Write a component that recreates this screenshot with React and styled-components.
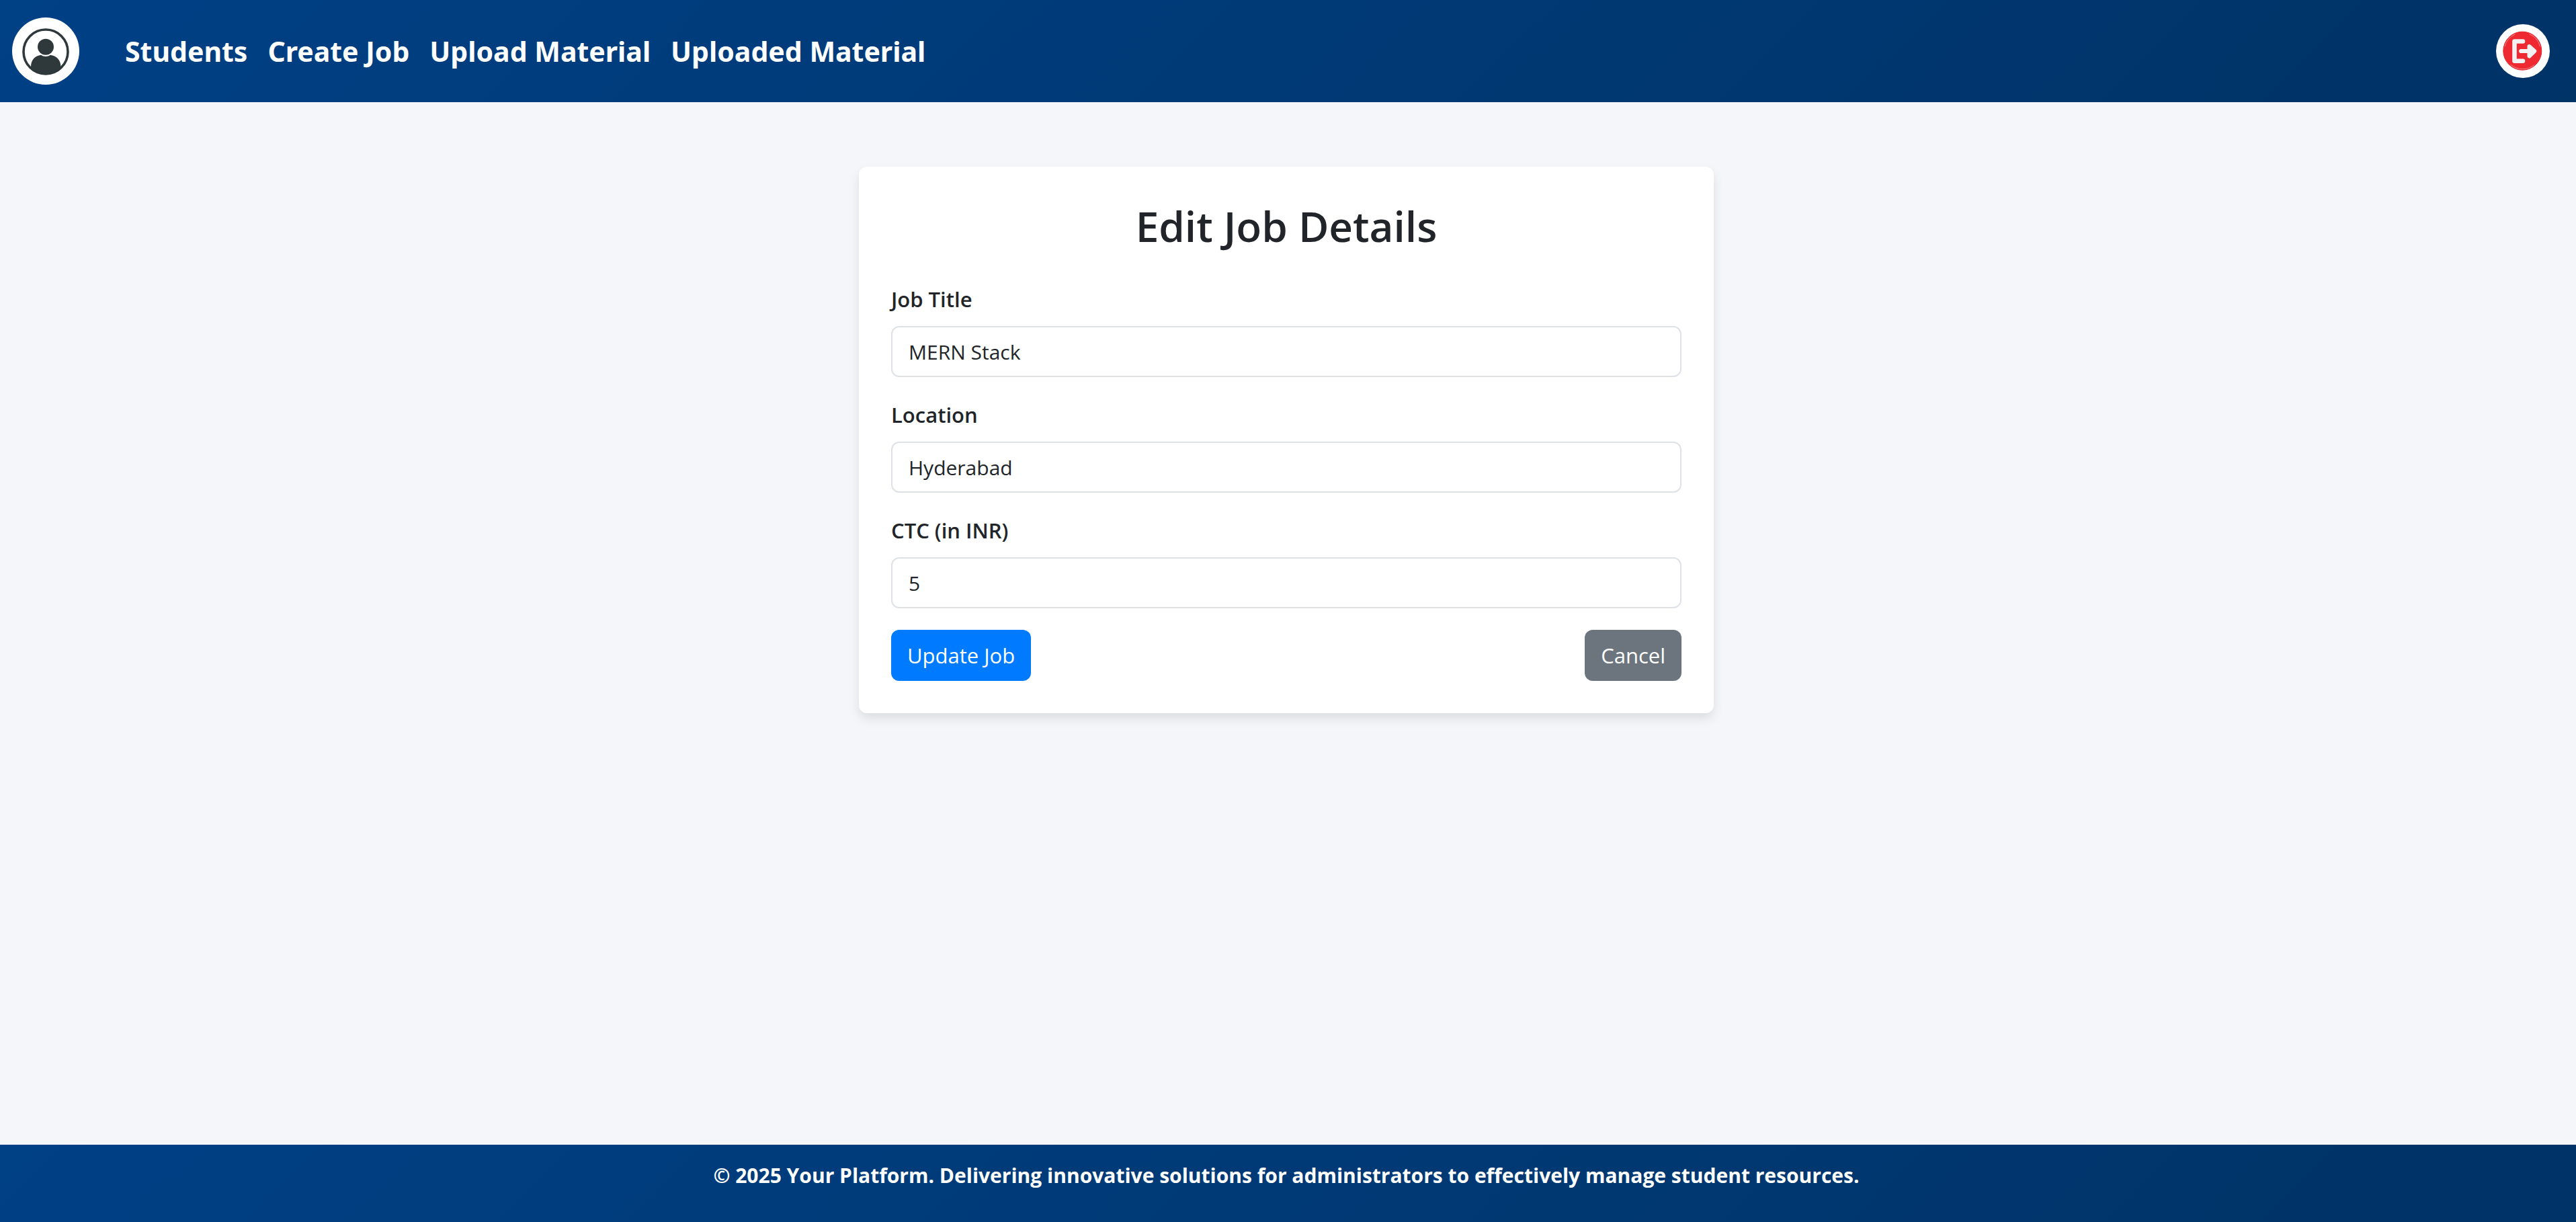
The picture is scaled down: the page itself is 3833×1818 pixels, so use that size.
import React, { useState } from "react";
import styled, { createGlobalStyle } from "styled-components";

const GlobalStyle = createGlobalStyle`
  *, *::before, *::after { box-sizing: border-box; }
  body {
    margin: 0;
    background: #f4f6fa;
    color: #212529;
    font-family: "Open Sans", "Noto Sans", sans-serif;
    font-size: 30px;
    line-height: 48px;
  }
`;

const Page = styled.div`
  display: flex;
  flex-direction: column;
  min-height: 100vh;
`;

const Header = styled.header`
  display: flex;
  align-items: center;
  padding: 26px 39px 26px 18px;
  background: linear-gradient(135deg, #004085, #003366);
`;

const AvatarLink = styled.a`
  display: flex;
  flex: none;
  width: 100px;
  height: 100px;
  border-radius: 50%;
  background: #fff;
`;

const Nav = styled.nav`
  display: flex;
  flex: 1;
  gap: 30px;
  margin-left: 68px;
`;

const NavLink = styled.a`
  color: #fff;
  font-family: "Noto Sans", "Open Sans", sans-serif;
  font-size: 41px;
  font-weight: 700;
  line-height: 46px;
  text-decoration: none;
  white-space: nowrap;
`;

const LogoutButton = styled.button`
  display: flex;
  flex: none;
  width: 80px;
  height: 80px;
  padding: 0;
  border: 0;
  border-radius: 50%;
  background: #fff;
  cursor: pointer;
`;

const Main = styled.main`
  display: flex;
  flex: 1;
  flex-direction: column;
  align-items: center;
  padding: 96px 5px 96px 0;
`;

const Card = styled.section`
  width: 100%;
  max-width: 1272px;
  padding: 48px;
  border-radius: 12px;
  background: #fff;
  box-shadow: 0 8px 16px rgba(0, 0, 0, 0.1);
`;

const Title = styled.h2`
  margin: 0 0 45px;
  font-size: 62px;
  font-weight: 600;
  line-height: 80px;
  text-align: center;
`;

const Form = styled.form`
  display: flex;
  flex-direction: column;
  gap: 32px;
`;

const Field = styled.div`
  display: flex;
  flex-direction: column;
  gap: 16px;
`;

const Label = styled.label`
  font-size: 31px;
  font-weight: 600;
`;

const Input = styled.input`
  width: 100%;
  height: 76px;
  padding: 12px 24px;
  border: 2px solid #dee2e6;
  border-radius: 12px;
  background: #fff;
  color: #212529;
  font: inherit;
`;

const Actions = styled.div`
  display: flex;
  justify-content: space-between;
`;

const Button = styled.button`
  height: 76px;
  padding: 12px 24px;
  border: 0;
  border-radius: 12px;
  background: ${(p) => (p.$variant === "primary" ? "#007bff" : "#6c757d")};
  color: #fff;
  font-family: inherit;
  font-size: 31px;
  line-height: 48px;
  cursor: pointer;
`;

const Footer = styled.footer`
  padding: 20px 5px 43px 0;
  background: linear-gradient(135deg, #004085, #003366);
  color: #fff;
  font-weight: 700;
  line-height: 52px;
  text-align: center;
`;

const FooterText = styled.p`
  margin: 0;
`;

function AvatarIcon() {
  return (
    <svg viewBox="0 0 100 100" width="100" height="100" aria-hidden="true">
      <circle cx="50" cy="51" r="33" fill="none" stroke="#2f393c" strokeWidth="3.6" />
      <circle cx="50" cy="43.7" r="12" fill="#2f393c" />
      <path
        d="M28 77V73.5C28 62.5 34.5 57 43 55.7C47 58.6 53 58.6 57 55.7C65.5 57 72.5 62.5 72.5 73.5V77A34.8 34.8 0 0 1 28 77Z"
        fill="#2f393c"
      />
    </svg>
  );
}

function LogoutIcon() {
  return (
    <svg viewBox="0 0 80 80" width="80" height="80" aria-hidden="true">
      <circle cx="39.3" cy="39.7" r="28.5" fill="#ee2932" stroke="#e5222c" />
      <path
        d="M13 33A27.2 27.2 0 0 1 28 15M50 14.7A27.2 27.2 0 0 1 65.5 33M22 60.5A27.2 27.2 0 0 0 57 60.5"
        fill="none"
        stroke="#f8898d"
        strokeWidth="1"
        strokeLinecap="round"
      />
      <g fill="none" stroke="#f2f2f3" strokeLinejoin="round" strokeLinecap="round">
        <path d="M40 25.5H27.5V54.7H40" strokeWidth="6.6" />
        <path d="M37.2 40H52" strokeWidth="6.2" />
        <path d="M49.5 33L57.2 40L49.5 47.5Z" fill="#f2f2f3" strokeWidth="6" />
      </g>
    </svg>
  );
}

const links = ["Students", "Create Job", "Upload Material", "Uploaded Material"];

const fields = [
  { id: "title", label: "Job Title" },
  { id: "location", label: "Location" },
  { id: "ctc", label: "CTC (in INR)" },
];

export default function App() {
  const [job, setJob] = useState({ title: "MERN Stack", location: "Hyderabad", ctc: "5" });

  return (
    <Page>
      <GlobalStyle />
      <Header>
        <AvatarLink href="#profile" aria-label="Profile">
          <AvatarIcon />
        </AvatarLink>
        <Nav>
          {links.map((text) => (
            <NavLink key={text} href={"#" + text.toLowerCase().replace(" ", "-")}>
              {text}
            </NavLink>
          ))}
        </Nav>
        <LogoutButton type="button" aria-label="Log out">
          <LogoutIcon />
        </LogoutButton>
      </Header>
      <Main>
        <Card>
          <Title>Edit Job Details</Title>
          <Form onSubmit={(e) => e.preventDefault()}>
            {fields.map(({ id, label }) => (
              <Field key={id}>
                <Label htmlFor={id}>{label}</Label>
                <Input
                  id={id}
                  type="text"
                  value={job[id]}
                  onChange={(e) => setJob({ ...job, [id]: e.target.value })}
                />
              </Field>
            ))}
            <Actions>
              <Button type="submit" $variant="primary">Update Job</Button>
              <Button type="button">Cancel</Button>
            </Actions>
          </Form>
        </Card>
      </Main>
      <Footer>
        <FooterText>
          © 2025 Your Platform. Delivering innovative solutions for administrators to effectively
          manage student resources.
        </FooterText>
      </Footer>
    </Page>
  );
}
